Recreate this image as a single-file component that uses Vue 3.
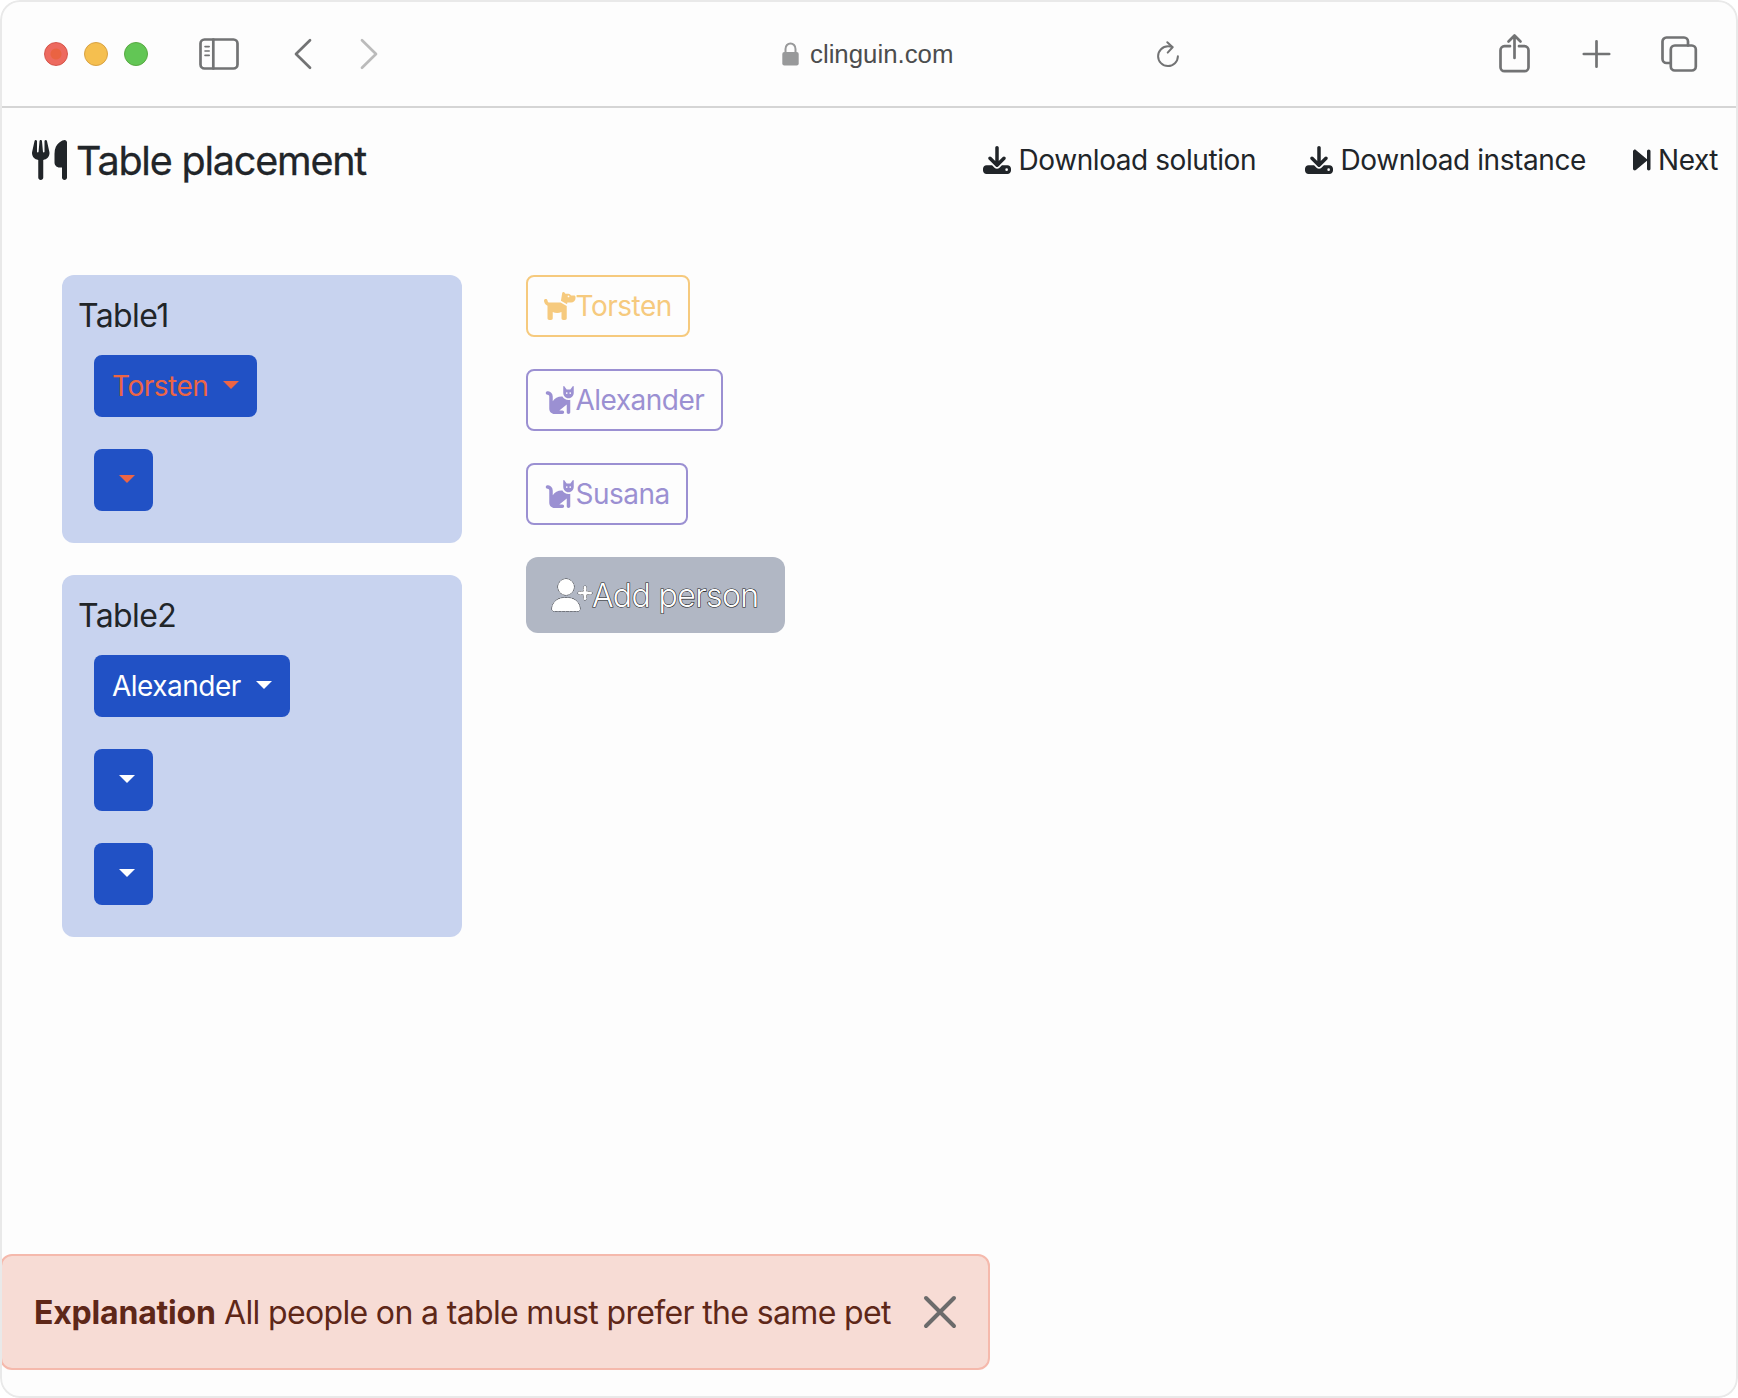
<script setup>
const icons = {
  download: {
    box: '0 0 512 512',
    d: 'M288 32c0-17.7-14.3-32-32-32s-32 14.3-32 32V274.7l-73.4-73.4c-12.5-12.5-32.8-12.5-45.3 0s-12.5 32.8 0 45.3l128 128c12.5 12.5 32.8 12.5 45.3 0l128-128c12.5-12.5 12.5-32.8 0-45.3s-32.8-12.5-45.3 0L288 274.7V32zM64 352c-35.3 0-64 28.7-64 64v32c0 35.3 28.7 64 64 64H448c35.3 0 64-28.7 64-64V416c0-35.3-28.7-64-64-64H346.5l-45.3 45.3c-25 25-65.5 25-90.5 0L165.5 352H64zm368 56a24 24 0 1 1 0 48 24 24 0 1 1 0-48z'
  },
  next: {
    box: '0 0 320 512',
    d: 'M52.5 440.6c-9.5 7.9-22.8 9.7-34.1 4.4S0 428.4 0 416V96C0 83.6 7.2 72.3 18.4 67s24.5-3.6 34.1 4.4l192 160L256 241V96c0-17.7 14.3-32 32-32s32 14.3 32 32V416c0 17.7-14.3 32-32 32s-32-14.3-32-32V271l-11.5 9.6-192 160z'
  },
  cat: {
    box: '0 0 576 512',
    d: 'M320 192h17.1c22.1 38.3 63.5 64 110.9 64c11 0 21.8-1.4 32-4v4 32V480c0 17.7-14.3 32-32 32s-32-14.3-32-32V339.2L280 448h56c17.7 0 32 14.3 32 32s-14.3 32-32 32H192c-53 0-96-43-96-96V192.5c0-16.1-12-29.8-28-31.8l-7.9-1c-17.5-2.2-30-18.2-27.8-35.7s18.2-30 35.7-27.8l7.9 1c48 6 84.1 46.8 84.1 95.3v85.3c34.4-51.7 93.2-85.8 160-85.8zm160 26.5v0c-10 3.5-20.8 5.5-32 5.5c-28.4 0-54-12.4-71.6-32h0c-3.7-4.1-7-8.5-9.9-13.2C357.3 164 352 146.6 352 128v0V32 12 10.7C352 4.8 356.7 .1 362.6 0h.2c3.3 0 6.4 1.6 8.4 4.2l0 .1L384 21.3l27.2 36.3L416 64h64l4.8-6.4L512 21.3 524.8 4.3l0-.1c2-2.6 5.1-4.2 8.4-4.2h.2C539.3 .1 544 4.8 544 10.7V12 32v96c0 17.3-4.6 33.6-12.6 47.6c-11.3 19.8-29.6 35.2-51.4 42.9zM432 128a16 16 0 1 0 -32 0 16 16 0 1 0 32 0zm48 16a16 16 0 1 0 0-32 16 16 0 1 0 0 32z'
  },
  dog: {
    box: '0 0 576 512',
    d: 'M309.6 158.5L332.7 19.8C334.6 8.4 344.5 0 356.1 0c7.5 0 14.5 3.5 19 9.5L392 32h52.1c12.7 0 24.9 5.1 33.9 14.1L496 64h56c13.3 0 24 10.7 24 24v24c0 44.2-35.8 80-80 80H464 448 426.7l-5.1 30.5-112-64zM416 256.1L416 480c0 17.7-14.3 32-32 32H352c-17.7 0-32-14.3-32-32V364.8c-24 12.3-51.2 19.2-80 19.2s-56-6.9-80-19.2V480c0 17.7-14.3 32-32 32H96c-17.7 0-32-14.3-32-32V249.8c-28.8-10.9-51.4-35.3-59.2-66.5L1 167.8c-4.3-17.1 6.1-34.5 23.3-38.8s34.5 6.1 38.8 23.3l3.9 15.5C70.5 182 83.3 192 98 192h30 16H303.8L416 256.1zM464 80a16 16 0 1 0 -32 0 16 16 0 1 0 32 0z'
  }
}

const menu = [
  { label: 'Download solution', icon: 'download', kind: 'solution' },
  { label: 'Download instance', icon: 'download', kind: 'instance' },
  { label: 'Next', icon: 'next', kind: 'next' }
]

const tables = [
  { name: 'Table1', invalid: true, seats: ['Torsten', ''] },
  { name: 'Table2', invalid: false, seats: ['Alexander', '', ''] }
]

const people = [
  { name: 'Torsten', pet: 'dog' },
  { name: 'Alexander', pet: 'cat' },
  { name: 'Susana', pet: 'cat' }
]
</script>

<template>
  <div class="window">
    <header class="toolbar">
      <div class="lights">
        <span class="light red"></span>
        <span class="light yellow"></span>
        <span class="light green"></span>
      </div>
      <svg class="sidebar-icon" width="40" height="32" viewBox="0 0 40 32">
        <rect x="1.5" y="1.5" width="37" height="29" rx="4" />
        <path d="M14.3 1.5v29" />
        <path class="thin" d="M6 8.6h4.2M6 13h4.2M6 17.4h4.2" />
      </svg>
      <svg class="back-icon" width="18" height="32" viewBox="0 0 18 32">
        <path d="M16 2.3L2 16l14 13.7" />
      </svg>
      <svg class="forward-icon" width="18" height="32" viewBox="0 0 18 32">
        <path d="M2 2.3L16 16 2 29.7" />
      </svg>
      <div class="address">
        <svg width="17" height="24" viewBox="0 0 17 24">
          <path class="shackle" d="M3.5 11V7a5 5.6 0 0 1 10 0v4" />
          <rect x="0.3" y="10" width="16.4" height="13.6" rx="2" />
        </svg>
        <span>clinguin.com</span>
      </div>
      <svg class="reload-icon" width="24" height="28" viewBox="0 0 24 28">
        <path d="M21.9 16.3A9.9 9.9 0 1 1 12 6.3c1.6 0 3 .2 4.4.7" />
        <path d="M11.3 2.3L16.6 7.3 11.7 12.6" />
      </svg>
      <div class="actions">
        <svg width="32" height="40" viewBox="0 0 32 40">
          <path d="M11 12.2H5.5a4 4 0 0 0-4 4V33.2a4 4 0 0 0 4 4H25.5a4 4 0 0 0 4-4V16.2a4 4 0 0 0-4-4H20" />
          <path d="M15.5 24V2M9.5 7.5l6-6 6 6" />
        </svg>
        <svg width="28" height="28" viewBox="0 0 28 28">
          <path d="M14.5 1.3v25.4M1.8 14h25.4" />
        </svg>
        <svg width="36" height="36" viewBox="0 0 36 36">
          <path d="M9.5 27H5.5a4 4 0 0 1-4-4V5.5a4 4 0 0 1 4-4H23a4 4 0 0 1 4 4V9.5" />
          <rect x="9.8" y="9.5" width="25" height="25" rx="4" />
        </svg>
      </div>
    </header>

    <nav class="navbar">
      <svg class="brand-icon" width="35" height="40" viewBox="0 0 448 512">
        <path d="M416 0C400 0 288 32 288 176V288c0 35.3 28.7 64 64 64h32V480c0 17.7 14.3 32 32 32s32-14.3 32-32V352 240 32c0-17.7-14.3-32-32-32zM64 16C64 7.8 57.9 1 49.7 .1S34.2 4.6 32.4 12.5L2.1 148.8C.7 155.1 0 161.5 0 167.9c0 45.9 35.1 83.6 80 87.7V480c0 17.7 14.3 32 32 32s32-14.3 32-32V255.6c44.9-4.1 80-41.8 80-87.7c0-6.4-.7-12.8-2.1-19.1L191.6 12.5c-1.8-8-9.3-13.3-17.4-12.4S160 7.8 160 16V150.2c0 5.4-4.4 9.8-9.8 9.8c-5.1 0-9.3-3.9-9.8-9L127.9 14.6C127.2 6.3 120.3 0 112 0s-15.2 6.3-15.9 14.6L83.7 151c-.5 5.1-4.7 9-9.8 9c-5.4 0-9.8-4.4-9.8-9.8V16z" />
      </svg>
      <h1>Table placement</h1>
      <ul class="menu">
        <li v-for="item in menu" :key="item.label" :class="item.kind">
          <svg :viewBox="icons[item.icon].box" height="28"><path :d="icons[item.icon].d" /></svg>
          <span>{{ item.label }}</span>
        </li>
      </ul>
    </nav>

    <main class="content">
      <div class="tables">
        <section v-for="table in tables" :key="table.name" class="table">
          <h2>{{ table.name }}</h2>
          <button
            v-for="(seat, i) in table.seats"
            :key="i"
            class="seat"
            :class="[seat ? seat.toLowerCase() : 'empty', { invalid: table.invalid }]"
          >
            <span>{{ seat }}</span>
            <i class="caret"></i>
          </button>
        </section>
      </div>
      <div class="people">
        <button
          v-for="person in people"
          :key="person.name"
          class="person"
          :class="[person.pet, person.name.toLowerCase()]"
        >
          <svg :viewBox="icons[person.pet].box" width="31.5" height="28"><path :d="icons[person.pet].d" /></svg>
          <span>{{ person.name }}</span>
        </button>
        <button class="add">
          <svg width="40" height="32" viewBox="0 0 640 512">
            <path d="M96 128a128 128 0 1 1 256 0A128 128 0 1 1 96 128zM0 482.3C0 383.8 79.8 304 178.3 304h91.4C368.2 304 448 383.8 448 482.3c0 16.4-13.3 29.7-29.7 29.7H29.7C13.3 512 0 498.7 0 482.3z" />
            <path d="M504 312V248H440c-13.3 0-24-10.7-24-24s10.7-24 24-24h64V136c0-13.3 10.7-24 24-24s24 10.7 24 24v64h64c13.3 0 24 10.7 24 24s-10.7 24-24 24H552v64c0 13.3-10.7 24-24 24s-24-10.7-24-24z" />
          </svg>
          <span>Add person</span>
        </button>
      </div>
    </main>

    <div class="alert">
      <strong>Explanation</strong>
      <span>All people on a table must prefer the same pet</span>
      <svg width="34" height="34" viewBox="0 0 34 34">
        <path d="M3 3l28 28M31 3L3 31" />
      </svg>
    </div>
  </div>
</template>

<style>
body {
  margin: 0;
  background: #fff;
}
</style>

<style scoped>
* {
  box-sizing: border-box;
}

.window {
  position: relative;
  display: flex;
  flex-direction: column;
  width: 1738px;
  height: 1398px;
  overflow: hidden;
  border-radius: 20px;
  background: #fdfdfd;
  color: #212529;
  font-family: Inter, "Liberation Sans", sans-serif;
  white-space: nowrap;
}

.window::after {
  content: "";
  position: absolute;
  inset: 0;
  border: 2px solid #e9e9e9;
  border-radius: 20px;
  pointer-events: none;
}

svg {
  display: block;
  flex: none;
  overflow: visible;
}

.toolbar {
  display: flex;
  align-items: center;
  flex: none;
  height: 108px;
  padding: 2px 41px 0 44px;
  border-bottom: 2px solid #d5d5d5;
}

.toolbar svg {
  fill: none;
  stroke: #727374;
  stroke-width: 2.7;
  stroke-linecap: round;
  stroke-linejoin: round;
}

.lights {
  display: flex;
  gap: 16px;
}

.light {
  width: 24px;
  height: 24px;
  border-radius: 50%;
}

.red {
  border: 1px solid #d5544a;
  background: radial-gradient(circle, #ea6342 5px, #ed6a5f 6px);
}

.yellow {
  border: 1px solid #d8a243;
  background: #f5bf4f;
}

.green {
  border: 1px solid #58a942;
  background: #62c655;
}

.sidebar-icon {
  margin-left: 51px;
}

.toolbar .thin {
  stroke-width: 1.6;
}

.back-icon {
  margin-left: 55px;
}

.forward-icon {
  margin-left: 48px;
}

.toolbar .forward-icon {
  stroke: #bbb;
}

.address {
  display: flex;
  align-items: center;
  width: 374px;
  margin-left: 404px;
  color: #4c4d4e;
  font: 25.8px/32px "Liberation Sans", Arial, sans-serif;
}

.address svg {
  margin-right: 11px;
}

.address rect {
  fill: #98999a;
  stroke: none;
}

.address .shackle {
  stroke: #98999a;
  stroke-width: 2;
}

.toolbar .reload-icon {
  stroke-width: 2;
}

.actions {
  display: flex;
  align-items: center;
  margin-left: auto;
  gap: 51px;
}

.navbar {
  display: flex;
  align-items: center;
  flex: none;
  height: 104px;
  padding: 0 20px 0 32px;
  margin-bottom: 63px;
}

.navbar svg {
  fill: #212529;
}

h1 {
  margin: 1px 0 0 9px;
  font-size: 39.5px;
  font-weight: 400;
  line-height: 48px;
  letter-spacing: -1.2px;
  -webkit-text-stroke: 0.3px currentColor;
}

.menu {
  display: flex;
  margin: 0 0 0 auto;
  padding: 0;
  list-style: none;
  font-size: 28px;
  line-height: 42px;
  letter-spacing: -0.42px;
}

.menu li {
  display: flex;
  align-items: center;
}

.menu svg {
  margin-right: 7.5px;
}

.solution {
  width: 322px;
}

.instance {
  width: 328px;
}

.next {
  width: 85px;
}

.content {
  display: flex;
  align-items: flex-start;
  padding-left: 62px;
  gap: 64px;
}

.tables,
.people {
  display: flex;
  flex-direction: column;
  align-items: flex-start;
  gap: 32px;
}

.table {
  display: flex;
  flex-direction: column;
  align-items: flex-start;
  gap: 32px;
  width: 400px;
  padding: 17px 16px 32px 32px;
  border-radius: 12px;
  background: #c8d3ef;
}

h2 {
  margin: 0 0 -17px -16px;
  font-size: 32px;
  font-weight: 400;
  line-height: 48px;
  letter-spacing: -0.6px;
}

button {
  display: flex;
  align-items: center;
  margin: 0;
  font-family: inherit;
  font-size: 28px;
  line-height: 42px;
  letter-spacing: -0.5px;
}

.seat {
  justify-content: space-between;
  height: 62px;
  padding: 0 18px;
  border: 0;
  border-radius: 8px;
  background: #2151c5;
  color: #fff;
}

.seat.torsten {
  width: 163px;
}

.seat.alexander {
  width: 196px;
}

.seat.empty {
  width: 59px;
}

.seat.invalid {
  color: #ec6545;
}

.caret {
  margin-top: -2px;
  border: 8px solid transparent;
  border-top-color: currentColor;
  border-bottom: 0;
}

.person {
  height: 62px;
  padding: 0 16px;
  border: 2px solid;
  border-radius: 8px;
  background: transparent;
}

.person svg {
  fill: currentColor;
}

.person.dog {
  color: #f6ca7e;
}

.person.cat {
  color: #9b90d2;
}

.person.torsten {
  width: 164px;
}

.person.alexander {
  width: 197px;
}

.person.susana {
  width: 162px;
}

.add {
  width: 259px;
  height: 76px;
  padding: 0 26px;
  border: 0;
  border-radius: 12px;
  background: #b1b7c4;
  color: #fff;
  font-size: 32px;
  font-weight: 300;
  line-height: 48px;
  letter-spacing: -0.6px;
}

.add span {
  padding-top: 2px;
  -webkit-text-stroke: 1.2px #1c1c1c;
  paint-order: stroke fill;
}

.add svg {
  fill: #fff;
  stroke: #222;
  stroke-width: 14;
  stroke-dasharray: 50 10;
  paint-order: stroke;
}

.alert {
  display: flex;
  align-items: center;
  width: 990px;
  height: 116px;
  margin: auto 0 28px;
  padding-left: 32px;
  border: 2px solid #f5b9ac;
  border-radius: 12px;
  background: #f7dcd5;
  color: #5e2718;
  font-size: 32px;
  line-height: 48px;
  letter-spacing: -0.65px;
}

.alert strong,
.alert span {
  padding-top: 2px;
}

.alert strong {
  width: 190px;
  font-weight: 700;
  letter-spacing: -0.2px;
}

.alert svg {
  margin: 0 31px 0 auto;
  fill: none;
  stroke: #6b6b6b;
  stroke-width: 4;
  stroke-linecap: round;
}
</style>
